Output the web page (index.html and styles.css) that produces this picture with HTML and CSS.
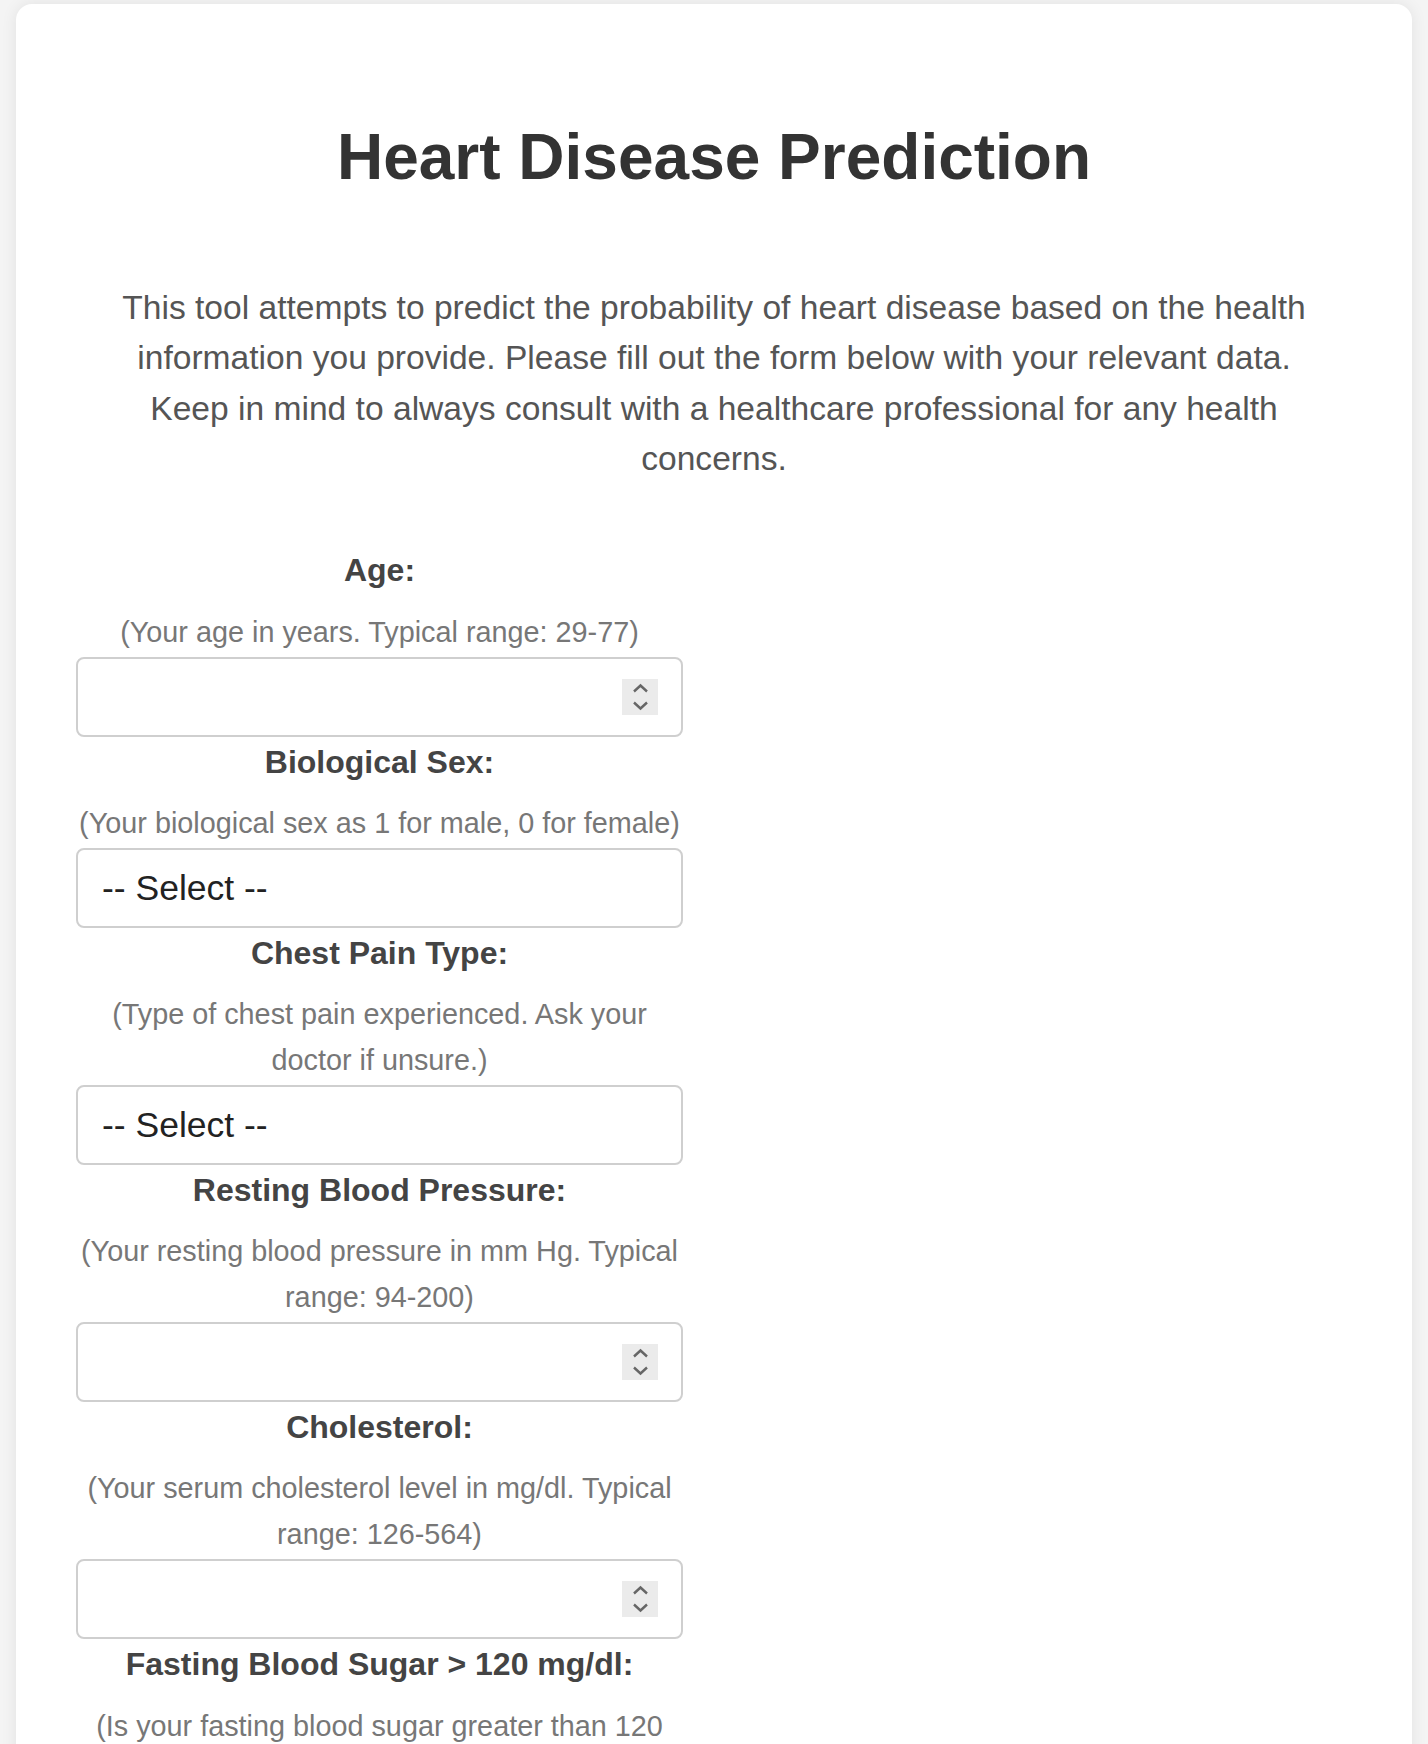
FILE: index.html
```html
<!DOCTYPE html>
<html lang="en">
  <head>
    <meta charset="UTF-8" />
    <meta name="viewport" content="width=device-width, initial-scale=1.0" />
    <title>Heart Disease Prediction</title>
    <link rel="stylesheet" href="styles.css">
  </head>
  <body>
    <div class="container">
      <h1>Heart Disease Prediction</h1>
      <p class="intro">
        This tool attempts to predict the probability of heart disease based on the health
        information you provide. Please fill out the form below with your relevant data.
        Keep in mind to always consult with a healthcare professional for any health
        concerns.
      </p>

      <form class="predict-form">
        <div class="form-group">
          <label for="age">Age:</label>
          <p class="hint">(Your age in years. Typical range: 29-77)</p>
          <div class="number-field">
            <input type="number" id="age" name="age" />
            <span class="spinner">
              <svg width="36" height="36" viewBox="0 0 36 36">
                <path d="M12 12.5 L18.5 6.5 L25 12.5 M12 23.5 L18.5 29.5 L25 23.5" fill="none" stroke="#666" stroke-width="2.4" />
              </svg>
            </span>
          </div>
        </div>

        <div class="form-group">
          <label for="sex">Biological Sex:</label>
          <p class="hint">(Your biological sex as 1 for male, 0 for female)</p>
          <select id="sex" name="sex">
            <option value="">-- Select --</option>
            <option value="1">Male</option>
            <option value="0">Female</option>
          </select>
        </div>

        <div class="form-group">
          <label for="cp">Chest Pain Type:</label>
          <p class="hint">(Type of chest pain experienced. Ask your doctor if unsure.)</p>
          <select id="cp" name="cp">
            <option value="">-- Select --</option>
            <option value="0">Typical Angina</option>
            <option value="1">Atypical Angina</option>
            <option value="2">Non-anginal Pain</option>
            <option value="3">Asymptomatic</option>
          </select>
        </div>

        <div class="form-group">
          <label for="trestbps">Resting Blood Pressure:</label>
          <p class="hint">(Your resting blood pressure in mm Hg. Typical range: 94-200)</p>
          <div class="number-field">
            <input type="number" id="trestbps" name="trestbps" />
            <span class="spinner">
              <svg width="36" height="36" viewBox="0 0 36 36">
                <path d="M12 12.5 L18.5 6.5 L25 12.5 M12 23.5 L18.5 29.5 L25 23.5" fill="none" stroke="#666" stroke-width="2.4" />
              </svg>
            </span>
          </div>
        </div>

        <div class="form-group">
          <label for="chol">Cholesterol:</label>
          <p class="hint">(Your serum cholesterol level in mg/dl. Typical range: 126-564)</p>
          <div class="number-field">
            <input type="number" id="chol" name="chol" />
            <span class="spinner">
              <svg width="36" height="36" viewBox="0 0 36 36">
                <path d="M12 12.5 L18.5 6.5 L25 12.5 M12 23.5 L18.5 29.5 L25 23.5" fill="none" stroke="#666" stroke-width="2.4" />
              </svg>
            </span>
          </div>
        </div>

        <div class="form-group">
          <label for="fbs">Fasting Blood Sugar &gt; 120 mg/dl:</label>
          <p class="hint">(Is your fasting blood sugar greater than 120 mg/dl? 1 for yes, 0 for no)</p>
          <select id="fbs" name="fbs">
            <option value="">-- Select --</option>
            <option value="1">Yes</option>
            <option value="0">No</option>
          </select>
        </div>

        <div class="form-group">
          <label for="thalach">Maximum Heart Rate:</label>
          <p class="hint">(Maximum heart rate achieved. Typical range: 71-202)</p>
          <div class="number-field">
            <input type="number" id="thalach" name="thalach" />
            <span class="spinner">
              <svg width="36" height="36" viewBox="0 0 36 36">
                <path d="M12 12.5 L18.5 6.5 L25 12.5 M12 23.5 L18.5 29.5 L25 23.5" fill="none" stroke="#666" stroke-width="2.4" />
              </svg>
            </span>
          </div>
        </div>
      </form>
    </div>
  </body>
</html>
```

FILE: styles.css
```css
* {
  box-sizing: border-box;
}

body {
  margin: 0;
  padding: 4px 16px 16px;
  background-color: #f4f4f4;
  font-family: "Liberation Sans", Arial, Helvetica, sans-serif;
  color: #333;
}

.container {
  background: #fff;
  border-radius: 16px;
  box-shadow: 0 0 16px rgba(0, 0, 0, 0.08);
  padding: 0 60px 60px;
}

h1 {
  margin: 0;
  padding: 115px 0 0;
  font-size: 64px;
  line-height: 76.8px;
  text-align: center;
  color: #333;
}

.intro {
  margin: 87px 0 61px;
  padding: 0 40px;
  font-size: 33.6px;
  line-height: 50.4px;
  text-align: center;
  color: #555;
}

/* Form */
.predict-form {
  width: 607px;
}

.form-group {
  text-align: center;
}

.form-group label {
  display: block;
  margin-bottom: 12px;
  font-size: 32px;
  line-height: 51.2px;
  font-weight: bold;
  color: #444;
}

.hint {
  margin: 0 0 2px;
  font-size: 28.8px;
  line-height: 46px;
  color: #777;
}

.form-group input,
.form-group select {
  display: block;
  width: 100%;
  height: 80px;
  padding: 0 24px;
  border: 2px solid #cfcfcf;
  border-radius: 8px;
  background: #fff;
  font-family: "Liberation Sans", Arial, sans-serif;
  font-size: 35.5px;
  color: #222;
  -webkit-appearance: none;
  appearance: none;
  outline: none;
}

.number-field {
  position: relative;
}

.number-field input::-webkit-inner-spin-button,
.number-field input::-webkit-outer-spin-button {
  -webkit-appearance: none;
  margin: 0;
}

.spinner {
  position: absolute;
  right: 25px;
  top: 22px;
  width: 36px;
  height: 36px;
  background: #ebebeb;
  pointer-events: none;
}

.spinner svg {
  display: block;
}
```
